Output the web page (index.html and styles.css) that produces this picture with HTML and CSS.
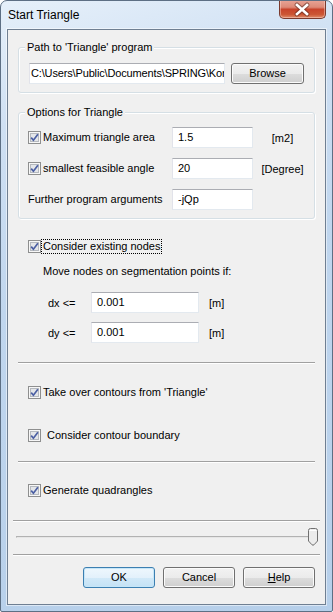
FILE: index.html
```html
<!DOCTYPE html>
<html>
<head>
<meta charset="utf-8">
<link rel="stylesheet" href="styles.css">
</head>
<body>
<div class="window">
  <div class="titlebar">
    <span class="title">Start Triangle</span>
    <div class="close">
      <svg width="47" height="19" viewBox="0 0 47 19">
        <path d="M18 5 L28 14 M28 5 L18 14" stroke="#5a2b22" stroke-width="5" stroke-linecap="round" opacity="0.55"/>
        <path d="M18 5 L28 14 M28 5 L18 14" stroke="#ffffff" stroke-width="2.6" stroke-linecap="square"/>
      </svg>
    </div>
  </div>
  <div class="client">
    <div class="group g1">
      <span class="caption">Path to 'Triangle' program</span>
      <div class="path-row">
        <div class="input path">C:\Users\Public\Documents\SPRING\Kon</div>
        <div class="btn browse">Browse</div>
      </div>
    </div>

    <div class="group g2">
      <span class="caption">Options for Triangle</span>
      <div class="opt-grid">
        <div class="check">
          <svg class="cb" width="13" height="13" viewBox="0 0 13 13"><rect x="0.5" y="0.5" width="12" height="12" fill="#f7f7f7" stroke="#8e8f8f"/><rect x="2.5" y="2.5" width="8" height="8" fill="#e4e6e9" stroke="#b5b9bf"/><path d="M3.2 6.6 L5.4 9.2 L9.9 3.2" stroke="#4b5fa3" stroke-width="1.7" fill="none"/></svg>
          <span>Maximum triangle area</span>
        </div>
        <div class="input">1.5</div>
        <span class="unit">[m2]</span>

        <div class="check">
          <svg class="cb" width="13" height="13" viewBox="0 0 13 13"><rect x="0.5" y="0.5" width="12" height="12" fill="#f7f7f7" stroke="#8e8f8f"/><rect x="2.5" y="2.5" width="8" height="8" fill="#e4e6e9" stroke="#b5b9bf"/><path d="M3.2 6.6 L5.4 9.2 L9.9 3.2" stroke="#4b5fa3" stroke-width="1.7" fill="none"/></svg>
          <span>smallest feasible angle</span>
        </div>
        <div class="input">20</div>
        <span class="unit">[Degree]</span>

        <span class="plain">Further program arguments</span>
        <div class="input">-jQp</div>
        <span class="unit"></span>
      </div>
    </div>

    <div class="nodes">
      <div class="check">
        <svg class="cb" width="13" height="13" viewBox="0 0 13 13"><rect x="0.5" y="0.5" width="12" height="12" fill="#f7f7f7" stroke="#8e8f8f"/><rect x="2.5" y="2.5" width="8" height="8" fill="#e4e6e9" stroke="#b5b9bf"/><path d="M3.2 6.6 L5.4 9.2 L9.9 3.2" stroke="#4b5fa3" stroke-width="1.7" fill="none"/></svg>
        <span class="focus">Consider existing nodes</span>
      </div>
      <div class="hint">Move nodes on segmentation points if:</div>
      <div class="d-grid">
        <span class="dlabel">dx &lt;=</span>
        <div class="input">0.001</div>
        <span class="dunit">[m]</span>
        <span class="dlabel">dy &lt;=</span>
        <div class="input">0.001</div>
        <span class="dunit">[m]</span>
      </div>
    </div>

    <div class="sep inner s1"></div>

    <div class="check row takeover">
      <svg class="cb" width="13" height="13" viewBox="0 0 13 13"><rect x="0.5" y="0.5" width="12" height="12" fill="#f7f7f7" stroke="#8e8f8f"/><rect x="2.5" y="2.5" width="8" height="8" fill="#e4e6e9" stroke="#b5b9bf"/><path d="M3.2 6.6 L5.4 9.2 L9.9 3.2" stroke="#4b5fa3" stroke-width="1.7" fill="none"/></svg>
      <span>Take over contours from 'Triangle'</span>
    </div>
    <div class="check row boundary">
      <svg class="cb" width="13" height="13" viewBox="0 0 13 13"><rect x="0.5" y="0.5" width="12" height="12" fill="#f7f7f7" stroke="#8e8f8f"/><rect x="2.5" y="2.5" width="8" height="8" fill="#e4e6e9" stroke="#b5b9bf"/><path d="M3.2 6.6 L5.4 9.2 L9.9 3.2" stroke="#4b5fa3" stroke-width="1.7" fill="none"/></svg>
      <span class="wide">Consider contour boundary</span>
    </div>

    <div class="sep inner s2"></div>

    <div class="check row quads">
      <svg class="cb" width="13" height="13" viewBox="0 0 13 13"><rect x="0.5" y="0.5" width="12" height="12" fill="#f7f7f7" stroke="#8e8f8f"/><rect x="2.5" y="2.5" width="8" height="8" fill="#e4e6e9" stroke="#b5b9bf"/><path d="M3.2 6.6 L5.4 9.2 L9.9 3.2" stroke="#4b5fa3" stroke-width="1.7" fill="none"/></svg>
      <span>Generate quadrangles</span>
    </div>

    <div class="sep full s3"></div>

    <div class="slider">
      <div class="track"></div>
      <svg class="thumb" width="10" height="18" viewBox="0 0 10 18">
        <path d="M0.5 2.5 Q0.5 0.5 2.5 0.5 H7.5 Q9.5 0.5 9.5 2.5 V13 L6 16.8 Q5 17.6 4 16.8 L0.5 13 Z" fill="#ececec" stroke="#707070"/>
        <path d="M1.5 2.5 H8.5" stroke="#ffffff"/>
      </svg>
    </div>

    <div class="sep full s4"></div>

    <div class="buttons">
      <div class="btn default">OK</div>
      <div class="btn">Cancel</div>
      <div class="btn"><u>H</u>elp</div>
    </div>
  </div>
</div>
</body>
</html>
```

FILE: styles.css
```css
html, body {
  margin: 0;
  padding: 0;
  background: #ffffff;
}

body {
  font-family: "Liberation Sans", Arial, sans-serif;
  font-size: 11px;
  color: #000000;
}

.window {
  width: 333px;
  height: 612px;
  box-sizing: border-box;
  border: 1px solid #5d6f84;
  border-radius: 7px 7px 2px 2px;
  background: linear-gradient(165deg, #e6f0fa 0%, #cfe0f3 18%, #c0d6ee 45%, #b6cfea 100%);
  display: flex;
  flex-direction: column;
  overflow: hidden;
}

.titlebar {
  height: 28px;
  display: flex;
  align-items: flex-start;
}

.title {
  font-size: 12px;
  line-height: 15px;
  padding: 7px 0 0 7px;
  color: #000000;
}

.close {
  margin: -1px 6px 0 auto;
  width: 47px;
  height: 19px;
  box-sizing: border-box;
  border: 1px solid #7a3a2e;
  border-top: none;
  border-radius: 0 0 5px 5px;
  background: linear-gradient(#e9a597 0%, #dd8a78 40%, #c8442c 52%, #cc5634 80%, #df8c6a 100%);
  box-shadow: inset 0 0 0 1px rgba(255, 220, 210, 0.45);
  position: relative;
}

.close svg {
  position: absolute;
  left: -1px;
  top: 0;
}

.client {
  margin: 0 6px;
  height: 576px;
  box-sizing: border-box;
  border: 1px solid #6f7f92;
  background: #f0f0f0;
  box-shadow: 0 0 0 1px rgba(255, 255, 255, 0.5);
  padding: 0 10px;
  display: flex;
  flex-direction: column;
}

.group {
  position: relative;
  border: 1px solid #d5dfe5;
  border-radius: 3px;
  box-shadow: inset 1px 1px 0 #ffffff, 1px 1px 0 #ffffff;
}

.caption {
  position: absolute;
  top: -7px;
  left: 6px;
  line-height: 13px;
  padding: 0 2px;
  background: #f0f0f0;
}

.g1 {
  margin-top: 17px;
  padding: 15px 0 8px 10px;
}

.path-row {
  display: flex;
  gap: 6px;
}

.input {
  height: 21px;
  box-sizing: border-box;
  border: 1px solid;
  border-color: #abadb3 #e3e9ef #e3e9ef #e2e3ea;
  background: #ffffff;
  padding-left: 5px;
  line-height: 19px;
  white-space: nowrap;
  overflow: hidden;
}

.input.path {
  width: 196px;
  padding-left: 1px;
  letter-spacing: -0.15px;
}

.btn {
  width: 73px;
  height: 21px;
  box-sizing: border-box;
  border: 1px solid #707070;
  border-radius: 3px;
  background: linear-gradient(#f2f2f2 0%, #ebebeb 50%, #dddddd 51%, #cfcfcf 100%);
  box-shadow: inset 0 0 0 1px #fbfbfb;
  text-align: center;
  line-height: 19px;
}

.btn.default {
  border-color: #3c7fb1;
  box-shadow: inset 0 0 0 1px #c6e6f8;
  background: linear-gradient(#eef7fd 0%, #e3f1fb 50%, #d2e9f8 51%, #c4e2f5 100%);
}

.g2 {
  margin-top: 19px;
  padding: 14px 0 8px 9px;
}

.opt-grid {
  display: grid;
  grid-template-columns: 144px 81px 59px;
  grid-auto-rows: 21px;
  row-gap: 10px;
  align-items: center;
}

.unit {
  text-align: center;
}

.check {
  display: flex;
  align-items: center;
  height: 13px;
  line-height: 13px;
}

.cb {
  flex: none;
  display: block;
  margin-right: 2px;
}

.plain {
  line-height: 13px;
}

.nodes {
  margin-top: 21px;
  padding-left: 10px;
}

.focus {
  outline: 1px dotted #000000;
  outline-offset: 0;
  padding: 0 1px 0 1px;
  margin-left: -1px;
}

.hint {
  margin-top: 12px;
  padding-left: 15px;
  line-height: 13px;
}

.d-grid {
  margin-top: 14px;
  padding-left: 20px;
  display: grid;
  grid-template-columns: 43px 108px auto;
  grid-auto-rows: 21px;
  row-gap: 9px;
  align-items: center;
}

.dunit {
  padding-left: 10px;
}

.sep {
  height: 1px;
  border-top: 1px solid #a0a0a0;
  background: #ffffff;
  flex: none;
}

.sep.full {
  margin-left: -5px;
  margin-right: -5px;
}

.s1 {
  margin-top: 19px;
}

.row {
  padding-left: 10px;
}

.takeover {
  margin-top: 22px;
}

.boundary {
  margin-top: 30px;
}

.wide {
  margin-left: 4px;
}

.s2 {
  margin-top: 19px;
}

.quads {
  margin-top: 21px;
}

.s3 {
  margin-top: 23px;
}

.slider {
  margin: 6px -3px 0 -2px;
  height: 18px;
  display: flex;
  align-items: center;
}

.track {
  flex: 1;
  height: 2px;
  box-sizing: border-box;
  border-top: 1px solid #b2b2b2;
  border-bottom: 1px solid #e6e6e6;
  border-left: 1px solid #b2b2b2;
  margin-right: -4px;
}

.thumb {
  display: block;
  flex: none;
}

.s4 {
  margin-top: 8px;
}

.buttons {
  margin-top: 11px;
  display: flex;
  justify-content: flex-end;
  gap: 8px;
  padding-right: 0;
}

.buttons .btn {
  width: 72px;
}
```
